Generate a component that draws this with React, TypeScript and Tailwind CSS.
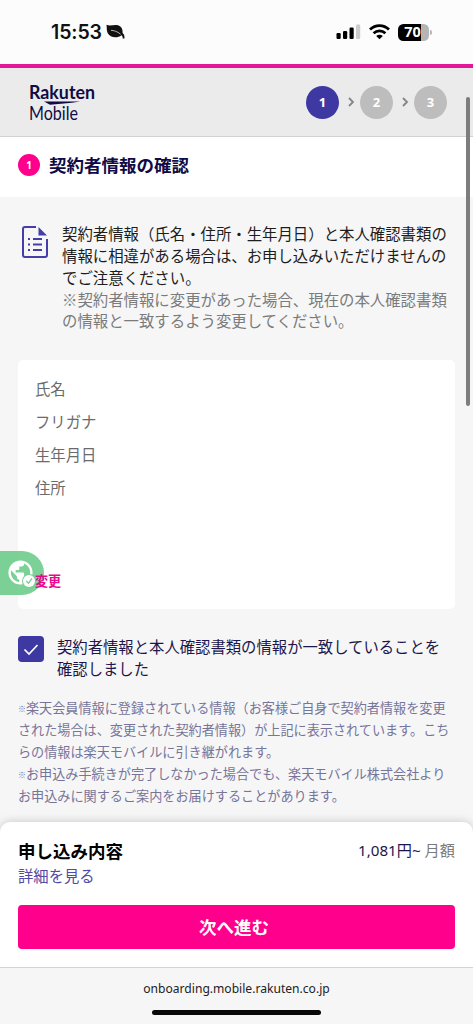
import { Fragment } from 'react';
import clsx from 'clsx';
import { MdPublic } from 'react-icons/md';

const FIELDS = ['氏名', 'フリガナ', '生年月日', '住所'];

const StatusBar = () => (
  <div className="flex h-16 shrink-0 items-center justify-between bg-[#fcfcfc] pl-[51px] pr-[41px]">
    <div className="flex items-center gap-[4px] font-['Inter'] text-[19.5px] font-semibold leading-6 tracking-[-0.1px] text-[#111]">
      <span>15:53</span>
      <svg width="19" height="16" viewBox="0 0 19 16" fill="none">
        <path d="M.5.800C4 2.800 8.500.2 12.500 1.500c3.300 1.200 4.300 4.200 4.100 7.500 1.400 1 2 2.700 1.900 5.400h-1.800c0-1.800-.4-2.600-1.200-3.100C11 14.800 3.900 13.600 1.600 9 .5 6.500.9 3.500.5.800z" fill="#111" />
        <path d="M5 6.300c2.800.2 6.200 1 9.600 3.900" stroke="#fcfcfc" strokeWidth=".7" />
      </svg>
    </div>
    <div className="flex items-center">
      <svg width="25" height="16" viewBox="0 0 25 16">
        <rect x="0.5" y="9" width="4.2" height="6" rx="1.2" fill="#000" />
        <rect x="7" y="7" width="4.2" height="8" rx="1.2" fill="#000" />
        <rect x="13.5" y="3.5" width="4.2" height="11.5" rx="1.2" fill="#000" />
        <rect x="20" y="0.5" width="4.2" height="14.5" rx="1.2" fill="#ccc" />
      </svg>
      <svg className="ml-2" width="21" height="16" viewBox="0 0 21 16" fill="none" stroke="#000" strokeWidth="2.8">
        <path d="M1 5.600c5.400-5.200 13.600-5.200 19 0" />
        <path d="M4.600 9.300c3.400-3.200 8.400-3.200 11.800 0" />
        <path d="M7.200 12c1.900-1.800 4.700-1.800 6.600 0L10.500 15.300z" fill="#000" stroke="none" />
      </svg>
      <div className="ml-2 flex h-[17px] w-[31px] items-center justify-center rounded-[5.5px] bg-[linear-gradient(90deg,#000_73%,#b5b5b5_73%)] pr-[2px] font-['Open_Sans'] text-[14.5px] font-bold leading-none text-white">
        70
      </div>
      <div className="ml-px h-[5px] w-[2px] rounded-r-full bg-[#b5b5b5]" />
    </div>
  </div>
);

const Logo = () => (
  <svg width="80" height="42" viewBox="0 0 80 42" fill="#100b46">
    <text x="0" y="18" textLength="66" lengthAdjust="spacingAndGlyphs" className="font-['Lato'] text-[18.5px] font-bold">Rakuten</text>
    <path d="M15 20.500h36l-8 1.300-22 2z" />
    <text x="0" y="38.500" textLength="49" lengthAdjust="spacingAndGlyphs" className="font-['Lato'] text-[18.5px]">Mobile</text>
  </svg>
);

const Steps = ({ current }: { current: number }) => (
  <div className="flex items-center">
    {[1, 2, 3].map((step) => (
      <Fragment key={step}>
        {step > 1 && (
          <svg className="ml-2 mr-[3px]" width="10" height="12" viewBox="0 0 10 12" fill="none" stroke="#868686" strokeWidth="1.8">
            <path d="M2 2l4 4-4 4" />
          </svg>
        )}
        <div
          className={clsx(
            "flex size-[33px] items-center justify-center rounded-full pt-px font-['Noto_Sans'] text-[13px] font-bold text-white",
            step === current ? 'bg-[#3e38a2]' : 'bg-[#bdbdbd]'
          )}
        >
          {step}
        </div>
      </Fragment>
    ))}
  </div>
);

const DocumentIcon = () => (
  <svg className="mt-[3px] shrink-0" width="26" height="32" viewBox="0 0 26 32" fill="none" stroke="#463da8" strokeWidth="2">
    <path d="M14 1H3Q1 1 1 3v26q0 2 2 2h20q2 0 2-2V13" />
    <path d="M16.500 1L25 9.500h-8.500z" fill="#463da8" stroke="none" />
    <path d="M6 13h2M6 18.500h2M6 24h2M11 13h9M11 18.500h9M11 24h9" />
  </svg>
);

// Small reference mark used in front of each note
const NoteMark = () => <span className="inline-block w-[8px] align-[1px] text-[8px] font-bold leading-none">※</span>;

const TranslateTab = () => (
  <div className="absolute left-0 top-[551px] h-[44px] w-[44px] rounded-r-full bg-[#65c985]/85">
    <MdPublic className="absolute left-[6px] top-[7px] size-[29px] text-white" />
    <svg className="absolute left-[22px] top-[23px]" width="14" height="14" viewBox="0 0 14 14" fill="none">
      <circle cx="7" cy="7" r="7" fill="#7ccf95" />
      <circle cx="7" cy="7" r="6" fill="#fff" />
      <path d="M4.300 7l2.200 2.200L10 4.500" stroke="#7ccf95" strokeWidth="1.3" />
    </svg>
  </div>
);

export default function App() {
  return (
    <div className="relative flex h-[1024px] w-[473px] flex-col overflow-hidden bg-[#f6f6f6] font-['Noto_Sans_CJK_JP',sans-serif] text-[15.35px] text-[#1d1d1d]">
      <StatusBar />
      <header className="flex h-[73px] shrink-0 items-center justify-between border-b border-t-[4px] border-b-[#d2d2d2] border-t-[#e21898] bg-[#ebebeb] pl-[29px] pr-[26px]">
        <Logo />
        <Steps current={1} />
      </header>

      <section className="flex h-[60px] shrink-0 items-center bg-white pb-[4px] pl-[18px]">
        <span className="flex size-[22px] items-center justify-center rounded-full bg-[#ff008c] font-['Noto_Sans'] text-[10px] font-bold text-white">1</span>
        <h1 className="ml-[9px] text-[17.5px] font-bold text-[#100b46]">契約者情報の確認</h1>
      </section>

      <section className="mt-[26px] flex h-[111px] shrink-0 gap-[14px] whitespace-nowrap pl-[22px] text-[15.4px] leading-[21.85px]">
        <DocumentIcon />
        <div>
          <p>
            契約者情報（氏名・住所・生年月日）と本人確認書類の<br />
            情報に相違がある場合は、お申し込みいただけませんの<br />
            でご注意ください。
          </p>
          <p className="text-[#7b7b7b]">
            ※契約者情報に変更があった場合、現在の本人確認書類<br />
            の情報と一致するよう変更してください。
          </p>
        </div>
      </section>

      <section className="mx-[18px] mt-[26px] flex h-[249px] shrink-0 flex-col justify-between rounded-[5px] bg-white px-[17px] pb-[17px] pt-[12px]">
        <div className="leading-[33px] text-[#6b6b6b]">
          {FIELDS.map((field) => (
            <p key={field}>{field}</p>
          ))}
        </div>
        <a className="relative z-10 self-start text-[13.1px] font-bold leading-[22px] text-[#e8088f]">変更</a>
      </section>

      <label className="ml-[18px] mt-[26px] flex shrink-0 gap-[13px] whitespace-nowrap leading-[22px] text-[#1c164d]">
        <span className="mt-px flex size-[26px] items-center justify-center rounded-[4px] bg-[#3e38a2]">
          <svg width="16" height="13" viewBox="0 0 16 13" fill="none" stroke="#fff" strokeWidth="1.7">
            <path d="M1.500 6.500l4.500 4.500L14.500 2" />
          </svg>
        </span>
        <span>
          契約者情報と本人確認書類の情報が一致していることを<br />
          確認しました
        </span>
      </label>

      <div className="ml-[18px] mt-[18px] shrink-0 whitespace-nowrap text-[13.13px] leading-[22px] text-[#77749a]">
        <p>
          <NoteMark />楽天会員情報に登録されている情報（お客様ご自身で契約者情報を変更<br />
          された場合は、変更された契約者情報）が上記に表示されています。こち<br />
          らの情報は楽天モバイルに引き継がれます。
        </p>
        <p>
          <NoteMark />お申込み手続きが完了しなかった場合でも、楽天モバイル株式会社より<br />
          お申込みに関するご案内をお届けすることがあります。
        </p>
      </div>

      <footer className="mt-auto flex h-[145px] shrink-0 flex-col rounded-t-[10px] bg-white px-[18px] pt-[16px] shadow-[0_-1px_8px_rgba(0,0,0,0.16)]">
        <div className="flex items-center justify-between leading-[25px]">
          <h2 className="text-[17.5px] font-bold text-black">申し込み内容</h2>
          <p className="font-['Noto_Sans','Noto_Sans_CJK_JP',sans-serif] text-[15.2px] text-[#7b7b7b]">
            <span className="text-[#1c164d]">1,081円~</span> 月額
          </p>
        </div>
        <a className="leading-[25px] text-[#514ba8]">詳細を見る</a>
        <button className="mt-[17px] h-[44px] rounded-[4px] bg-[#ff008c] pr-[5px] text-[17.5px] font-bold text-white">次へ進む</button>
      </footer>

      <div className="z-10 flex h-[57px] shrink-0 flex-col items-center border-t border-[#d4d4d4] bg-[#f6f6f6] pt-[10px]">
        <span className="font-['Noto_Sans'] text-[12.1px] leading-[22px] text-[#222]">onboarding.mobile.rakuten.co.jp</span>
        <div className="mt-[10px] h-[5px] w-[169px] rounded-full bg-[#080808]" />
      </div>

      <div className="absolute left-[466px] top-[97px] h-[309px] w-[4px] rounded-full bg-[#7d7d7d]" />
      <TranslateTab />
    </div>
  );
}
